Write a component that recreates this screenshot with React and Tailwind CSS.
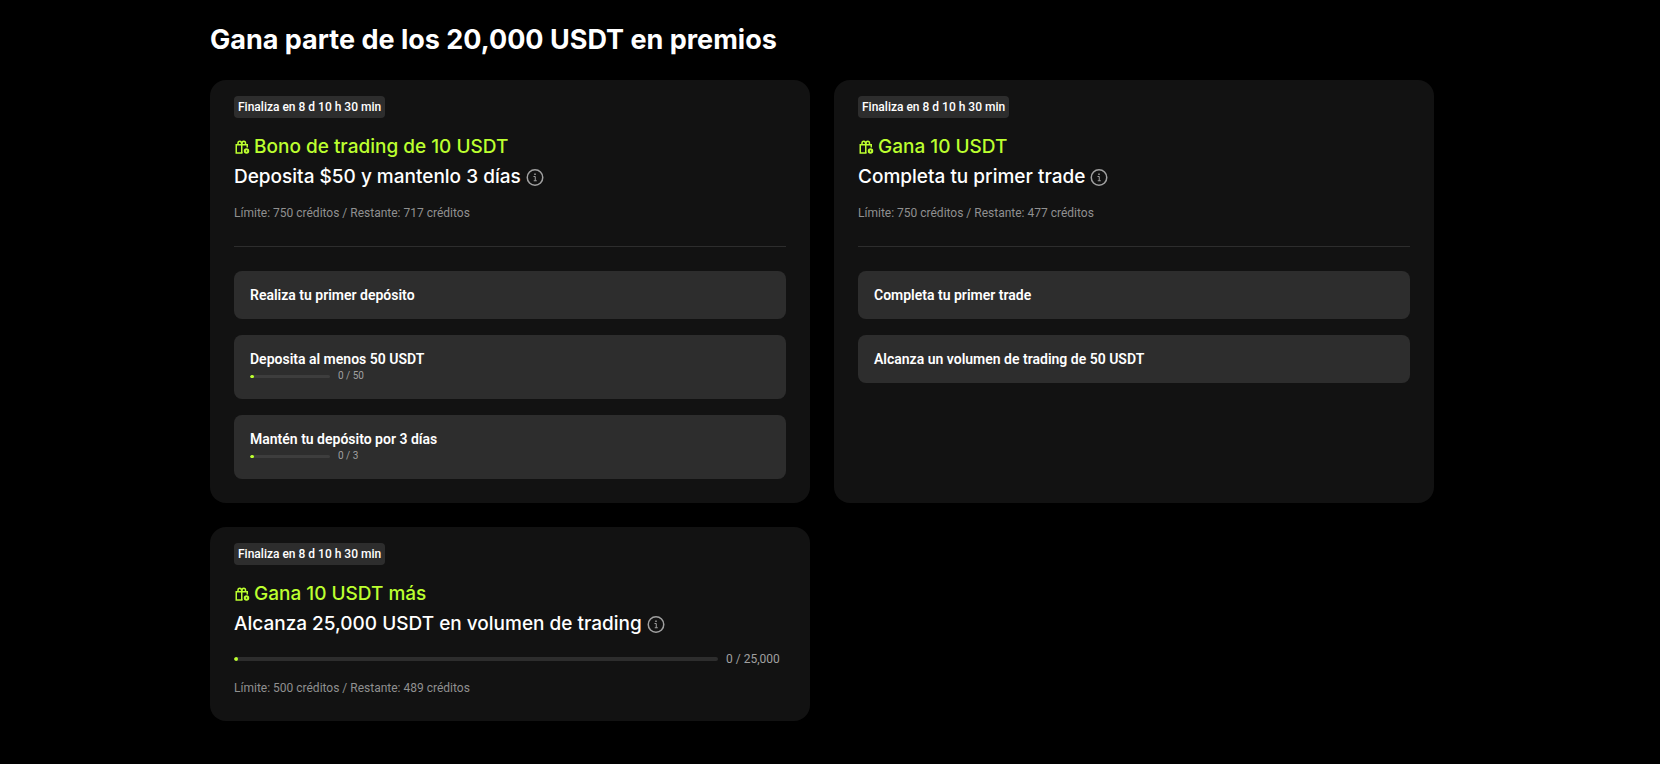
import React from "react";

const rewards = [
  {
    id: "deposit",
    prize: "Bono de trading de 10 USDT",
    title: "Deposita $50 y mantenlo 3 días",
    limit: 750,
    left: 717,
    tasks: [
      { name: "Realiza tu primer depósito" },
      { name: "Deposita al menos 50 USDT", value: 0, goal: 50 },
      { name: "Mantén tu depósito por 3 días", value: 0, goal: 3 },
    ],
  },
  {
    id: "trade",
    prize: "Gana 10 USDT",
    title: "Completa tu primer trade",
    limit: 750,
    left: 477,
    tasks: [
      { name: "Completa tu primer trade" },
      { name: "Alcanza un volumen de trading de 50 USDT" },
    ],
  },
  {
    id: "volume",
    prize: "Gana 10 USDT más",
    title: "Alcanza 25,000 USDT en volumen de trading",
    limit: 500,
    left: 489,
    value: 0,
    goal: 25000,
  },
];

function GiftIcon() {
  return (
    <svg className="size-4 shrink-0" viewBox="0 0 16 16" fill="none" stroke="currentColor" strokeWidth="1.5" aria-hidden="true">
      <path d="M8.5 14H2.25V5.75H13.25V8.5" />
      <path d="M7.75 5.5V14" />
      <path d="M4 5.5V4.25C4 3 4.75 2.25 5.75 2.25C6.75 2.25 7.75 3.25 7.75 5.5" />
      <path d="M7.75 5.5C7.75 3.25 8.75 2.25 9.75 2.25C10.75 2.25 11.5 3 11.5 4.25V5.5" />
      <circle cx="12.5" cy="12" r="1.75" strokeWidth="2" />
    </svg>
  );
}

function InfoButton({ title }) {
  return (
    <button type="button" aria-label={"Información: " + title} className="shrink-0 text-[#a0a0a0]">
      <svg className="size-5" viewBox="0 0 20 20" fill="none" stroke="currentColor" strokeWidth="1.5">
        <circle cx="10" cy="10.5" r="7.75" />
        <path d="M8.5 9.5H10.25V13.75M8.75 13.75H11.75" strokeWidth="1" />
        <path d="M9.25 7.25H10.75" />
      </svg>
    </button>
  );
}

function Bar({ label, value, goal, className }) {
  return (
    <div
      role="progressbar"
      aria-label={label}
      aria-valuenow={value}
      aria-valuemin={0}
      aria-valuemax={goal}
      className={"overflow-hidden rounded-full " + className}
    >
      <div
        className="h-full min-w-1 rounded-full bg-[#bcff2f]"
        style={{ width: (value / goal) * 100 + "%" }}
      />
    </div>
  );
}

function Task({ task }) {
  return (
    <li className="rounded-lg bg-[#2d2d2d] p-4">
      <p className="text-sm leading-4 font-semibold">{task.name}</p>
      {task.goal && (
        <div className="mt-0.5 flex h-3.5 items-center gap-2">
          <Bar label={task.name} value={task.value} goal={task.goal} className="h-[3px] w-20 bg-[#3d3d3d]" />
          <span className="text-[10px] leading-3 text-[#a0a0a0]">
            {task.value} / {task.goal}
          </span>
        </div>
      )}
    </li>
  );
}

function RewardCard({ reward }) {
  return (
    <section className="rounded-2xl bg-[#121212] px-6 pt-4 pb-6">
      <span className="block h-[22px] w-fit rounded-sm bg-[#2d2d2d] px-1 text-xs leading-[22px] font-medium">
        Finaliza en 8 d 10 h 30 min
      </span>
      <h2 className="mt-3.5 font-['Inter',sans-serif] text-[19px] leading-[30px] font-medium">
        <span className="flex items-center gap-1 text-[#bcff2f]">
          <GiftIcon />
          {reward.prize}
        </span>
        <span className="flex items-center gap-1">
          {reward.title}
          <InfoButton title={reward.title} />
        </span>
      </h2>

      {reward.goal && (
        <div className="mt-3 flex items-center gap-2">
          <Bar label={reward.title} value={reward.value} goal={reward.goal} className="h-1 flex-1 bg-[#2d2d2d]" />
          <span className="min-w-15 text-xs leading-4 text-[#a0a0a0]">
            {reward.value} / {reward.goal.toLocaleString("en-US")}
          </span>
        </div>
      )}

      <p className="mt-3 text-xs leading-[18px] text-[#909090]">
        Límite: {reward.limit} créditos / Restante: {reward.left} créditos
      </p>

      {reward.tasks && (
        <ul className="mt-6 flex flex-col gap-4 border-t border-[#2d2d2d] pt-6">
          {reward.tasks.map((task) => (
            <Task key={task.name} task={task} />
          ))}
        </ul>
      )}
    </section>
  );
}

export default function App() {
  return (
    <main className="min-h-screen bg-black pt-5 pr-4 pb-10 font-['Roboto',sans-serif] text-white">
      <div className="mx-auto max-w-[1224px]">
        <h1 className="font-['Inter',sans-serif] text-[27px] leading-10 font-bold">
          Gana parte de los 20,000 USDT en premios
        </h1>
        <div className="mt-5 grid grid-cols-1 gap-6 md:grid-cols-2">
          {rewards.map((reward) => (
            <RewardCard key={reward.id} reward={reward} />
          ))}
        </div>
      </div>
    </main>
  );
}
